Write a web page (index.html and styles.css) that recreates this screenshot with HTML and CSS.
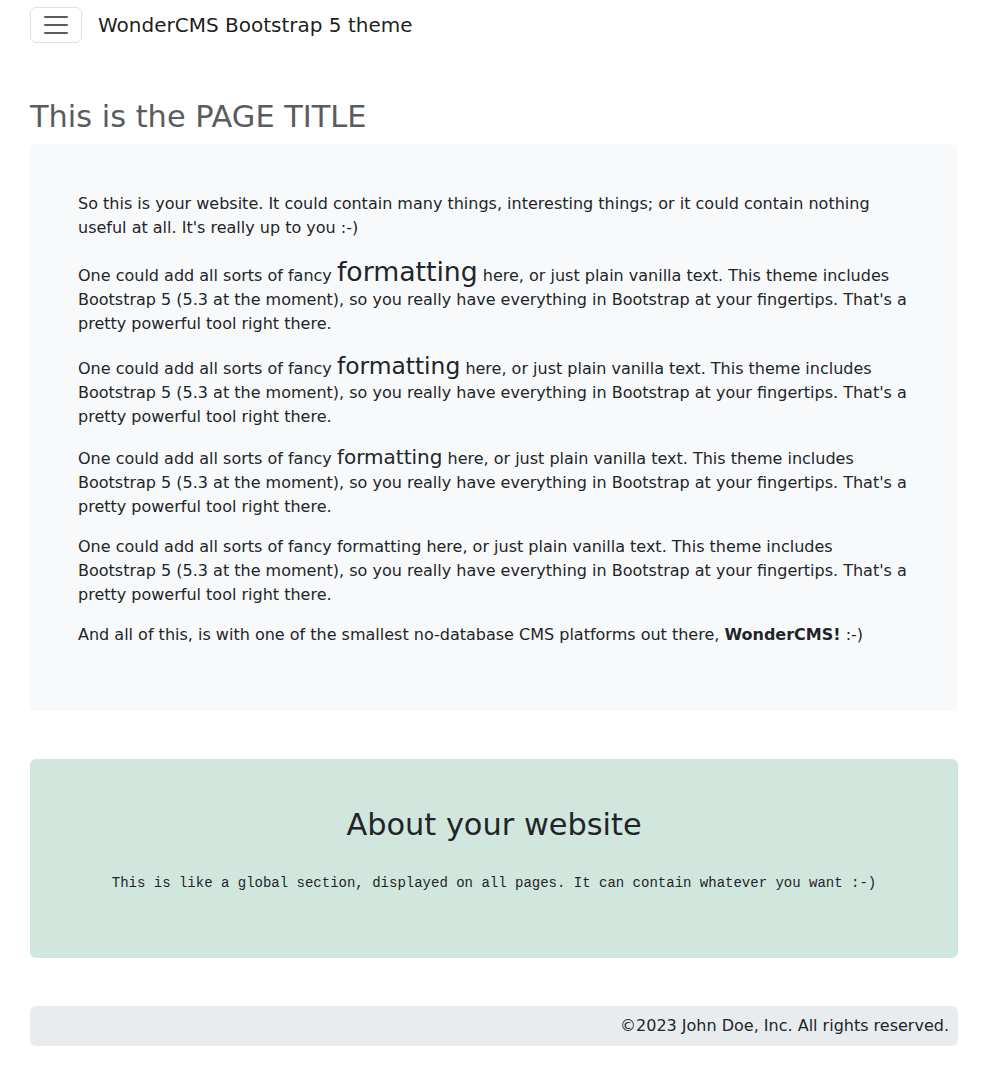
FILE: index.html
```html
<!DOCTYPE html>
<html lang="en">
<head>
<meta charset="utf-8">
<title>WonderCMS Bootstrap 5 theme</title>
<link rel="stylesheet" href="styles.css">
</head>
<body>
<div class="page">
  <nav class="navbar">
    <button class="toggler" type="button" aria-label="Toggle navigation">
      <svg class="toggler-icon" viewBox="0 0 30 30" width="30" height="30" aria-hidden="true">
        <path d="M4 7h22M4 15h22M4 23h22" stroke="rgba(33,37,41,0.75)" stroke-width="2" stroke-linecap="round" stroke-miterlimit="10" fill="none"/>
      </svg>
    </button>
    <a class="brand" href="#">WonderCMS Bootstrap 5 theme</a>
  </nav>

  <main class="main">
    <h1 class="page-title">This is the PAGE TITLE</h1>
    <div class="content-card">
      <p>So this is your website. It could contain many things, interesting things; or it could contain nothing useful at all. It's really up to you :-)</p>
      <p>One could add all sorts of fancy <span class="fs-h3">formatting</span> here, or just plain vanilla text. This theme includes Bootstrap 5 (5.3 at the moment), so you really have everything in Bootstrap at your fingertips. That's a pretty powerful tool right there.</p>
      <p>One could add all sorts of fancy <span class="fs-h4">formatting</span> here, or just plain vanilla text. This theme includes Bootstrap 5 (5.3 at the moment), so you really have everything in Bootstrap at your fingertips. That's a pretty powerful tool right there.</p>
      <p>One could add all sorts of fancy <span class="fs-h5">formatting</span> here, or just plain vanilla text. This theme includes Bootstrap 5 (5.3 at the moment), so you really have everything in Bootstrap at your fingertips. That's a pretty powerful tool right there.</p>
      <p>One could add all sorts of fancy formatting here, or just plain vanilla text. This theme includes Bootstrap 5 (5.3 at the moment), so you really have everything in Bootstrap at your fingertips. That's a pretty powerful tool right there.</p>
      <p>And all of this, is with one of the smallest no-database CMS platforms out there, <b>WonderCMS!</b> :-)</p>
    </div>

    <section class="about">
      <h2 class="about-title">About your website</h2>
      <p class="about-text"><span class="mono">This is like a global section, displayed on all pages. It can contain whatever you want :-)</span></p>
    </section>
  </main>

  <footer class="footer">©2023 John Doe, Inc. All rights reserved.</footer>
</div>
</body>
</html>
```

FILE: styles.css
```css
* { box-sizing: border-box; }

html, body {
  margin: 0;
  padding: 0;
  background: #fff;
}

body {
  font-family: "DejaVu Sans", "Liberation Sans", sans-serif;
  font-size: 16px;
  line-height: 1.5;
  color: #212529;
}

.page {
  padding: 0 31px 36px 30px;
}

.navbar {
  display: flex;
  align-items: flex-start;
  gap: 16px;
  padding-top: 7px;
  height: 50px;
}

.toggler {
  display: flex;
  align-items: center;
  justify-content: center;
  width: 52px;
  height: 36px;
  padding: 0;
  background: transparent;
  border: 1px solid rgba(0, 0, 0, 0.12);
  border-radius: 6px;
}

.toggler-icon {
  display: block;
}

.brand {
  font-size: 20px;
  line-height: 36px;
  color: rgba(0, 0, 0, 0.9);
  text-decoration: none;
}

.main {
  padding-top: 49px;
}

.page-title {
  margin: 0 0 9px;
  font-size: 30.4px;
  font-weight: normal;
  line-height: 1.2;
  color: #595c5f;
}

.content-card {
  background: #f8f9fa;
  border-radius: 6px;
  padding: 48px;
}

.content-card p {
  margin: 0 0 16px;
}

.fs-h3, .fs-h4, .fs-h5 {
  line-height: 1.2;
}
.fs-h3 { font-size: 26.7px; line-height: 1.18; }
.fs-h4 { font-size: 23.4px; }
.fs-h5 { font-size: 20px; }

.about {
  margin-top: 48px;
  background: #d1e7dd;
  border-radius: 6px;
  padding: 48px;
  text-align: center;
}

.about-title {
  margin: 0 0 26px;
  font-size: 30.4px;
  font-weight: normal;
  line-height: 1.2;
  color: #212529;
}

.about-text {
  margin: 0 0 16px;
}

.mono {
  font-family: "Liberation Mono", "DejaVu Sans Mono", monospace;
  font-size: 14px;
}

.footer {
  margin-top: 48px;
  background: #e9ecef;
  border-radius: 6px;
  padding: 8px 9px;
  text-align: right;
}
```
